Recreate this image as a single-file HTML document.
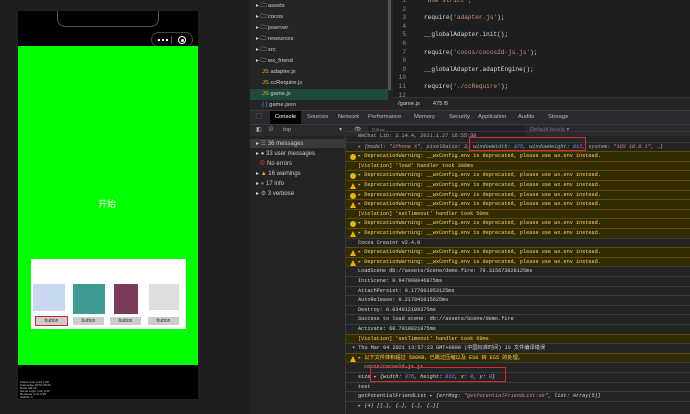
<!DOCTYPE html><html><head><meta charset="utf-8"><style>
*{margin:0;padding:0;box-sizing:border-box}
body{width:690px;height:414px;background:#1f1f1f;position:relative;overflow:hidden;font-family:"Liberation Sans","Noto Sans CJK SC",sans-serif}
.a{position:absolute}
.mono{font-family:"Liberation Mono","Noto Sans CJK SC",monospace}
.row{position:absolute;left:346px;width:344px;height:9.6px;font-size:5.2px;line-height:9.6px;padding-left:12px;color:#d4d4d4;border-top:1px solid #3a3a3a;white-space:nowrap;overflow:hidden}
.w{background:#332b00;color:#f5d27a;border-top:1px solid #5c4b00}
.ic{display:inline-block;width:6px;height:6px;border-radius:50%;background:#e8b500;position:absolute;left:4px;top:2px}
.tri{position:absolute;left:4px;top:2px;width:0;height:0;border-left:3px solid transparent;border-right:3px solid transparent;border-bottom:6px solid #e8b500}
.ft{position:absolute;left:0;font-size:5.8px;color:#ccc;height:11px;line-height:11px}
.code{position:absolute;left:393px;font-size:6.1px;color:#ddd;width:297px}
.ln{display:inline-block;width:13px;text-align:right;color:#888;margin-right:18px}
.s{color:#ce9178}
.side{position:absolute;left:250px;font-size:6px;color:#ccc}
</style></head><body>
<!-- phone -->
<div class="a" style="left:18px;top:11px;width:180px;height:388px;background:#000"></div>
<div class="a" style="left:57px;top:11px;width:102px;height:16px;border:1px solid #555;border-top:none;border-radius:0 0 8px 8px"></div>
<div class="a" style="left:151px;top:32px;width:42px;height:15px;border:1px solid #444;border-radius:8px;background:#000"></div>
<div class="a" style="left:158px;top:39px;width:10px;height:2px;border-top:2px dotted #fff"></div>
<div class="a" style="left:171px;top:36px;width:1px;height:8px;background:#555"></div>
<div class="a" style="left:178px;top:36px;width:8px;height:8px;border:1px solid #fff;border-radius:50%"></div>
<div class="a" style="left:180.5px;top:38.5px;width:3px;height:3px;background:#fff;border-radius:50%"></div>
<div class="a" style="left:18px;top:46px;width:180px;height:319px;background:#00ff00"></div>
<div class="a" style="left:98px;top:197px;font-size:9px;color:#fff">开始</div>
<div class="a" style="left:31px;top:259px;width:155px;height:70px;background:#fff"></div>
<div class="a" style="left:33px;top:284px;width:32px;height:27px;background:#c8d8f0"></div>
<div class="a" style="left:73px;top:284px;width:32px;height:30px;background:#3f9a92"></div>
<div class="a" style="left:114px;top:284px;width:24px;height:30px;background:#7a3a5a"></div>
<div class="a" style="left:149px;top:284px;width:30px;height:26px;background:#ddd"></div>
<div class="a" style="left:35px;top:316px;width:33px;height:10px;border:1px solid #e02020;background:#ccc;font-size:5px;text-align:center;line-height:8px;color:#333">button</div>
<div class="a" style="left:73px;top:317px;width:31px;height:8px;background:#ccc;font-size:5px;text-align:center;line-height:8px;color:#333">button</div>
<div class="a" style="left:110px;top:317px;width:31px;height:8px;background:#ccc;font-size:5px;text-align:center;line-height:8px;color:#333">button</div>
<div class="a" style="left:148px;top:317px;width:31px;height:8px;background:#ccc;font-size:5px;text-align:center;line-height:8px;color:#333">button</div>
<div class="a" style="left:20px;top:381px;width:32px;height:15px;font-size:3px;color:#ccc;line-height:3px">Frame time (ms) 1.60<br>Framerate (FPS) 60.00<br>Draw call 10<br>Game Logic (ms) 0.20<br>Renderer (ms) 0.90<br>WebGL 0</div>
<!-- devtools -->
<div class="a" style="left:250px;top:0;width:143px;height:110px;background:#252526"></div>
<div class="a" style="left:388px;top:0;width:3px;height:90px;background:#555"></div>
<div class="a" style="left:250px;top:89px;width:138px;height:11px;background:#1d4a3a"></div>
<div class="a" style="left:256px;top:0;width:130px;height:110px;color:#ccc">
<div class="ft" style="top:1px">▸ 🗀 assets</div>
<div class="ft" style="top:12px">▸ 🗀 cocos</div>
<div class="ft" style="top:23px">▸ 🗀 jsserver</div>
<div class="ft" style="top:34px">▸ 🗀 resources</div>
<div class="ft" style="top:45px">▸ 🗀 src</div>
<div class="ft" style="top:56px">▸ 🗀 wx_friend</div>
<div class="ft" style="top:67px;left:6px"><span style="color:#e6b422">JS</span> adapter.js</div>
<div class="ft" style="top:78px;left:6px"><span style="color:#e6b422">JS</span> ccRequire.js</div>
<div class="ft" style="top:89px;left:6px"><span style="color:#e6b422">JS</span> game.js</div>
<div class="ft" style="top:100px;left:6px"><span style="color:#4a9eff">{ }</span> game.json</div>
</div>
<div class="a" style="left:393px;top:0;width:297px;height:98px;background:#1e1e1e"></div>
<div class="code mono" style="top:-3px">
<div style="height:8.6px;line-height:8px"><span class="ln">1</span><span class="s">'use strict';</span></div>
<div style="height:8.6px;line-height:8px"><span class="ln">2</span></div>
<div style="height:8.6px;line-height:8px"><span class="ln">3</span>require(<span class="s">'adapter.js'</span>);</div>
<div style="height:8.6px;line-height:8px"><span class="ln">4</span></div>
<div style="height:8.6px;line-height:8px"><span class="ln">5</span>__globalAdapter.init();</div>
<div style="height:8.6px;line-height:8px"><span class="ln">6</span></div>
<div style="height:8.6px;line-height:8px"><span class="ln">7</span>require(<span class="s">'cocos/cocos2d-js.js'</span>);</div>
<div style="height:8.6px;line-height:8px"><span class="ln">8</span></div>
<div style="height:8.6px;line-height:8px"><span class="ln">9</span>__globalAdapter.adaptEngine();</div>
<div style="height:8.6px;line-height:8px"><span class="ln">10</span></div>
<div style="height:8.6px;line-height:8px"><span class="ln">11</span>require(<span class="s">'./ccRequire'</span>);</div>
<div style="height:8.6px;line-height:8px"><span class="ln">12</span></div>
</div>
<div class="a" style="left:393px;top:97px;width:297px;height:13px;background:#252526;border-top:1px solid #333;font-size:5.8px;color:#ccc;line-height:12px;padding-left:5px">/game.js &nbsp;&nbsp;&nbsp;&nbsp;&nbsp;&nbsp; 475 B</div>
<div class="a" style="left:250px;top:110px;width:440px;height:14px;background:#292a2d;border-top:1px solid #3a3a3a;font-size:5.8px;color:#bbb;line-height:13px">
<span class="a" style="left:6px;top:0">⬚</span>
<span class="a" style="left:20px;top:0;width:31px;height:13px;background:#000;color:#fff;text-align:center">Console</span>
<span class="a" style="left:57px">Sources</span><span class="a" style="left:88px">Network</span><span class="a" style="left:118px">Performance</span><span class="a" style="left:164px">Memory</span><span class="a" style="left:199px">Security</span><span class="a" style="left:228px">Application</span><span class="a" style="left:268px">Audits</span><span class="a" style="left:298px">Storage</span></div>
<div class="a" style="left:250px;top:124px;width:440px;height:12px;background:#292a2d;border-top:1px solid #3a3a3a;font-size:5.8px;color:#aaa;line-height:11px">
<span class="a" style="left:6px">◧</span><span class="a" style="left:18px">⊘</span><span class="a" style="left:33px">top</span><span class="a" style="left:89px">▾</span><span class="a" style="left:104px">👁</span>
<span class="a" style="left:118px;top:1px;width:158px;height:10px;background:#202124;padding-left:4px;line-height:10px;color:#777">Filter</span><span class="a" style="left:280px;color:#777">Default levels ▾</span></div>
<div class="a" style="left:250px;top:136px;width:96px;height:278px;background:#242424;border-right:1px solid #3a3a3a"></div>
<div class="a" style="left:250px;top:139px;width:96px;height:9px;background:#3a3a3a"></div>
<div class="side" style="top:139px;left:256px;line-height:10px;width:90px">
<div>▸ <span style="color:#888">☰</span> 36 messages</div><div>▸ <span style="color:#bbb">●</span> 33 user messages</div><div>&nbsp;&nbsp;<span style="color:#e33">⊗</span> No errors</div><div>▸ <span style="color:#e8b500">▲</span> 16 warnings</div><div>▸ <span style="color:#3b82f6">●</span> 17 info</div><div>▸ <span style="color:#aaa">⚙</span> 3 verbose</div></div>
<div class="a" style="left:346px;top:136px;width:344px;height:278px;background:#242424"></div>
<div class="mono">
<div class="row" style="top:131px;color:#aaa">WeChat Lib: 2.14.4, 2021.1.27 16:55:38</div>
<div class="row" style="top:141.6px;color:#aaa">▸ <i>{model: <span class="s">"iPhone X"</span>, pixelRatio: 3, windowWidth: <span style="color:#9980ff">375</span>, windowHeight: <span style="color:#9980ff">812</span>, system: <span class="s">"iOS 10.0.1"</span>, …}</i></div>
<div class="row w" style="top:151.2px"><span class="ic"></span>▸ DeprecationWarning: __wxConfig.env is deprecated, please use wx.env instead.</div>
<div class="row w" style="top:160.8px">[Violation] 'load' handler took 300ms</div>
<div class="row w" style="top:170.4px"><span class="ic"></span>▸ DeprecationWarning: __wxConfig.env is deprecated, please use wx.env instead.</div>
<div class="row w" style="top:180px"><span class="tri"></span>▸ DeprecationWarning: __wxConfig.env is deprecated, please use wx.env instead.</div>
<div class="row w" style="top:189.6px"><span class="ic"></span>▸ DeprecationWarning: __wxConfig.env is deprecated, please use wx.env instead.</div>
<div class="row w" style="top:199.2px"><span class="tri"></span>▸ DeprecationWarning: __wxConfig.env is deprecated, please use wx.env instead.</div>
<div class="row w" style="top:208.8px">[Violation] 'setTimeout' handler took 50ms</div>
<div class="row w" style="top:218.4px"><span class="ic"></span>▸ DeprecationWarning: __wxConfig.env is deprecated, please use wx.env instead.</div>
<div class="row w" style="top:228px"><span class="tri"></span>▸ DeprecationWarning: __wxConfig.env is deprecated, please use wx.env instead.</div>
<div class="row" style="top:237.6px">Cocos Creator v2.4.0</div>
<div class="row w" style="top:247.2px"><span class="tri"></span>▸ DeprecationWarning: __wxConfig.env is deprecated, please use wx.env instead.</div>
<div class="row w" style="top:256.8px"><span class="tri"></span>▸ DeprecationWarning: __wxConfig.env is deprecated, please use wx.env instead.</div>
<div class="row" style="top:266.4px">LoadScene db://assets/Scene/demo.fire: 79.315673828125ms</div>
<div class="row" style="top:276px">InitScene: 0.947998046875ms</div>
<div class="row" style="top:285.6px">AttachPersist: 0.177001953125ms</div>
<div class="row" style="top:295.2px">AutoRelease: 0.217041015625ms</div>
<div class="row" style="top:304.8px">Destroy: 0.034912109375ms</div>
<div class="row" style="top:314.4px">Success to load scene: db://assets/Scene/demo.fire</div>
<div class="row" style="top:324px">Activate: 60.7919921875ms</div>
<div class="row w" style="top:333.6px">[Violation] 'setTimeout' handler took 69ms</div>
<div class="row" style="top:343.2px;padding-left:6px">▾ Thu Mar 04 2021 13:57:23 GMT+0800 (中国标准时间) JS 文件编译错误</div>
<div class="row w" style="top:352.8px"><span class="tri"></span>▸ 以下文件体积超过 500KB，已跳过压缩以及 ES6 转 ES5 的处理。</div>
<div class="row" style="top:362.4px;padding-left:18px;color:#aaa">cocos/cocos2d-js.js</div>
<div class="row" style="top:372px">size ▸ <i>{width: <span style="color:#9980ff">375</span>, height: <span style="color:#9980ff">812</span>, x: <span style="color:#9980ff">0</span>, y: <span style="color:#9980ff">0</span>}</i></div>
<div class="row" style="top:381.6px">test</div>
<div class="row" style="top:391.2px">getPotentialFriendList ▸ <i>{errMsg: <span class="s">"getPotentialFriendList:ok"</span>, list: Array(5)}</i></div>
<div class="row" style="top:400.8px">▸ <i>(4) [{…}, {…}, {…}, {…}]</i></div>
</div>
<div class="a" style="left:469px;top:137px;width:117px;height:14px;border:1.5px solid #e02828"></div>
<div class="a" style="left:370px;top:367px;width:136px;height:15px;border:1.5px solid #e02828"></div>
</body></html>
